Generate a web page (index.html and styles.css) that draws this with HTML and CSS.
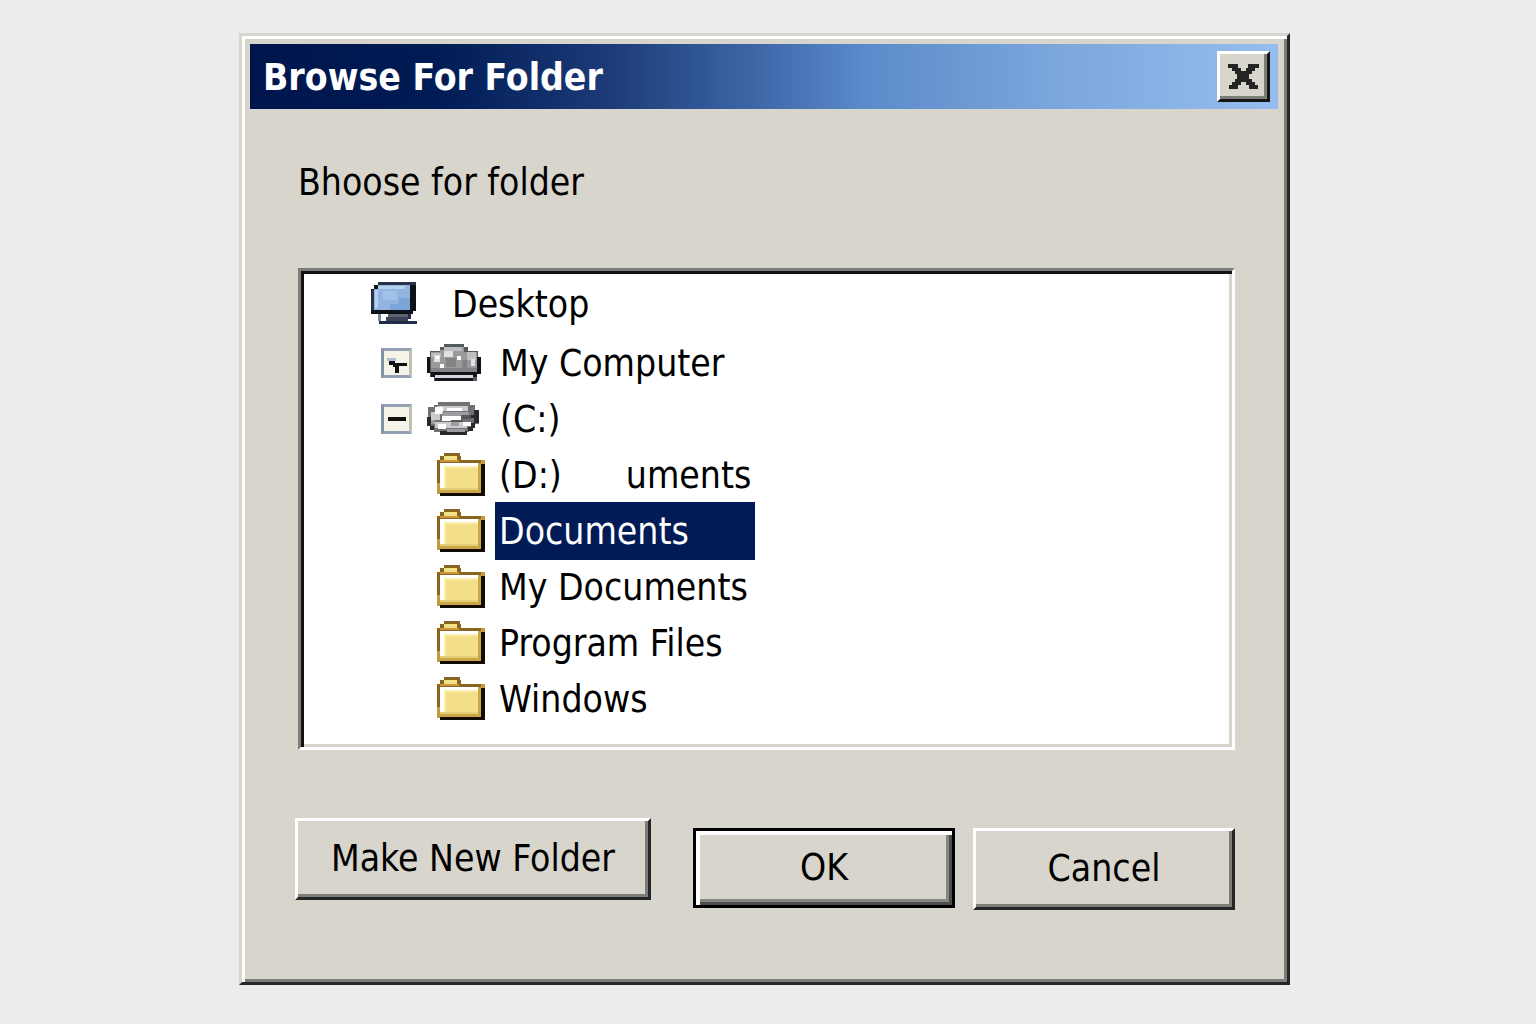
FILE: index.html
```html
<!DOCTYPE html>
<html lang="en">
<head>
<meta charset="utf-8">
<meta name="viewport" content="width=device-width, initial-scale=1">
<title>Browse For Folder</title>
<link rel="stylesheet" href="styles.css">
</head>
<body>
<svg class="sprites" aria-hidden="true">
  <symbol id="folder" viewBox="0 0 48 44">
    <path fill="#8a6420" d="M7 0h16v3h-16zM3 3h4v4h-4zM20 3h4v4h-4zM0 7h48v3h-48zM0 10h3v31h-3z"/>
    <path fill="#f3e08c" d="M7 3h13v4h-13z"/>
    <path fill="#c49a3c" d="M3 7h19v2h-19zM0 30h3v11h-3zM44 7h4v4h-4z"/>
    <path fill="#fff" d="M3 10h40v28h-40z"/>
    <path fill="#f3df88" d="M7 13h34v24h-34z"/>
    <path fill="#fbf0b0" d="M7 13h34v2h-34zM7 15h2v21h-2z"/>
    <path fill="#c9a648" d="M41 10h3v30h-3zM3 37h41v3h-41z"/>
    <path fill="#e8d07a" d="M3 35h38v2h-38z"/>
    <path fill="#120d04" d="M44 11h4v32h-4zM3 40h41v3h-41z"/>
  </symbol>
</svg>
<main class="dialog" role="dialog" aria-labelledby="dialog-title">
  <header class="titlebar">
    <h1 class="title" id="dialog-title">Browse For Folder</h1>
    <button class="close" type="button" aria-label="Close">
      <svg width="31" height="25" viewBox="0 0 31 25" shape-rendering="crispEdges" aria-hidden="true">
        <path fill="#242424" d="M0 0h10v4h-10zM20 0h11v4h-11zM4 4h9v3h-9zM18 4h9v3h-9zM7 7h17v3h-17zM9 10h12v5h-12zM7 15h17v3h-17zM4 18h9v3h-9zM18 18h9v3h-9zM1 21h9v4h-9zM21 21h9v4h-9z"/>
      </svg>
    </button>
  </header>
  <div class="content">
    <p class="prompt" id="prompt">Bhoose for folder</p>
    <ul class="tree" role="tree" aria-labelledby="prompt">
      <li class="row row-root" role="treeitem">
        <svg width="47" height="44" viewBox="0 0 47 44" shape-rendering="crispEdges" aria-hidden="true">
          <path fill="#0d1118" d="M7 0h38v29h-3v3h-42v-25h3v-4h4z"/>
          <path fill="#26334a" d="M7 0h38v3h-38zM0 8h3v20h-3z"/>
          <path fill="#92b4df" d="M3 7h4v-4h32v25h-36z"/>
          <path fill="#b7cfee" d="M7 4h27v3h-27zM4 8h3v18h-3z"/>
          <path fill="#a0c1ea" d="M12 9h14v9h-14z"/>
          <path fill="#7ba5d6" d="M28 16h11v12h-20v-6h9z"/>
          <path fill="#5d626e" d="M17 32h21v3h-21z"/>
          <path fill="#3b4359" d="M15 35h22v5h-22z"/>
          <path fill="#7e8aa5" d="M7 32h3v7h-3z"/>
          <path fill="#1f2d49" d="M8 39h38v3h-38zM37 32h3v5h-3z"/>
        </svg>
        <span class="label">Desktop</span>
      </li>
      <li class="row row-branch" role="treeitem">
        <button class="expander" type="button" aria-label="Toggle My Computer">
          <svg width="20" height="20" viewBox="0 0 20 20" shape-rendering="crispEdges" aria-hidden="true">
            <path fill="#aebfd0" d="M0 5h9v3h-9z"/>
            <path fill="#111" d="M2 8h6v2h12v3h-8v7h-4v-6h-2v-2h-4z"/>
          </svg>
        </button>
        <svg width="54" height="38" viewBox="0 0 54 38" shape-rendering="crispEdges" aria-hidden="true">
          <path fill="#555a5d" d="M17 0h20v3h4v4h10v6h3v17h-4v7h-43v-4h-4v-4h-3v-16h3v-6h10v-4h4z"/>
          <path fill="#111316" d="M0 13h3v15h47v-15h4v17h-4v3h-46v-4h-4z"/>
          <path fill="#9a9a9c" d="M17 3h20v5h13v20h-46v-20h9v-2h4z"/>
          <path fill="#bebec0" d="M17 3h18v4h-18zM4 9h10v4h-10zM40 8h9v8h-9z"/>
          <path fill="#e2e2e4" d="M17 7h9v6h-9zM7 11h6v7h-6zM44 15h4v7h-4z"/>
          <path fill="#fff" d="M13 20h4v4h-4zM30 12h4v4h-4zM9 12h3v3h-3z"/>
          <path fill="#838386" d="M19 14h10v9h-10zM4 24h46v4h-46zM35 16h5v8h-5z"/>
          <path fill="#d6d6df" d="M8 31h38v3h-38z"/>
          <path fill="#16181b" d="M8 34h38v3h-38z"/>
        </svg>
        <span class="label">My Computer</span>
      </li>
      <li class="row row-branch" role="treeitem">
        <button class="expander" type="button" aria-label="Collapse (C:)">
          <svg width="20" height="20" viewBox="0 0 20 20" shape-rendering="crispEdges" aria-hidden="true">
            <path fill="#111" d="M1 8h18v4h-18z"/>
          </svg>
        </button>
        <svg width="54" height="34" viewBox="0 0 54 34" shape-rendering="crispEdges" aria-hidden="true">
          <path fill="#707274" d="M7 3h4v-3h32v3h5v6h4v13h-4v4h-6v4h-35v-4h-3v-4h-3v-17h6z"/>
          <path fill="#27292c" d="M0 15h4v9h3v4h-4v-4h-3zM47 8h5v13h-4v5h-4v-5h3v-5h-13v-3h13zM13 29h27v4h-27zM41 25h5v4h-5z"/>
          <path fill="#c9cbcd" d="M10 4h31v5h-31zM4 10h9v8h-9zM8 20h32v6h-32z"/>
          <path fill="#fff" d="M8 5h8v7h-8zM20 6h15v3h-15zM15 14h19v5h-19zM11 22h8v5h-8zM36 20h8v4h-8z"/>
          <path fill="#9b9da0" d="M15 10h27v4h-27zM24 20h8v4h-8zM4 18h4v4h-4zM20 27h18v3h-18z"/>
          <path fill="#54585a" d="M34 13h10v4h-10zM24 18h12v2h-12z"/>
        </svg>
        <span class="label">(C:)</span>
      </li>
      <li class="row row-leaf" role="treeitem">
        <svg class="folder" shape-rendering="crispEdges" aria-hidden="true"><use href="#folder"/></svg>
        <span class="label label-split"><span>(D:)</span><span>uments</span></span>
      </li>
      <li class="row row-leaf" role="treeitem" aria-selected="true">
        <svg class="folder" shape-rendering="crispEdges" aria-hidden="true"><use href="#folder"/></svg>
        <span class="label label-selected">Documents</span>
      </li>
      <li class="row row-leaf" role="treeitem">
        <svg class="folder" shape-rendering="crispEdges" aria-hidden="true"><use href="#folder"/></svg>
        <span class="label">My Documents</span>
      </li>
      <li class="row row-leaf" role="treeitem">
        <svg class="folder" shape-rendering="crispEdges" aria-hidden="true"><use href="#folder"/></svg>
        <span class="label">Program Files</span>
      </li>
      <li class="row row-leaf" role="treeitem">
        <svg class="folder" shape-rendering="crispEdges" aria-hidden="true"><use href="#folder"/></svg>
        <span class="label">Windows</span>
      </li>
    </ul>
    <footer class="actions">
      <button class="button button-new" type="button">Make New Folder</button>
      <div class="confirm">
        <button class="button button-default" type="button">OK</button>
        <button class="button" type="button">Cancel</button>
      </div>
    </footer>
  </div>
</main>
</body>
</html>
```
FILE: styles.css
```css
* {
  box-sizing: border-box;
}

:root {
  --face: #d8d5cc;
  --shadow: #7d7d79;
  --dark: #252628;
}

body {
  margin: 0;
  padding: 33px 246px 39px 239px;
  background: #ececec;
  color: #000;
  font: 37px/48px "DejaVu Sans Condensed", "DejaVu Sans", Tahoma, sans-serif;
}

button {
  font: inherit;
  color: inherit;
}

.sprites {
  display: none;
}

.dialog {
  padding: 8px 9px 6px 8px;
  background: var(--face);
  border: 3px solid;
  border-color: #d8d5cc var(--dark) var(--dark) #d8d5cc;
  box-shadow: inset 3px 3px #fff, inset -3px -3px var(--shadow);
}

.titlebar {
  display: flex;
  align-items: center;
  justify-content: space-between;
  height: 65px;
  padding: 0 8px 0 13px;
  background: linear-gradient(90deg, #00154c 0%, #001b55 18%, #1c3b78 35%, #4069aa 50%, #5b8bca 60%, #7ba6dc 78%, #96bdee 100%);
}

.title {
  margin: 0;
  padding-top: 2px;
  color: #fff;
  font-size: 37px;
  font-weight: bold;
}

.close {
  display: grid;
  place-items: center;
  width: 53px;
  height: 51px;
  padding: 0;
  background: var(--face);
  border: 3px solid;
  border-color: #fff #151515 #151515 #fff;
  box-shadow: inset -3px -3px var(--shadow);
}

.content {
  padding: 50px 43px 66px 48px;
}

.prompt {
  margin: 0 0 61px;
}

.tree {
  margin: 0;
  padding: 5px 3px 20px;
  list-style: none;
  background: #fff;
  border: 3px solid;
  border-color: #7c7c7a #fff #fff #7c7c7a;
  box-shadow: inset 3px 3px #111, inset -3px -3px #d8d5cc;
}

.row {
  display: flex;
  align-items: center;
  height: 56px;
}

.row svg {
  flex: none;
}

.row-root {
  gap: 30px;
  margin-bottom: 3px;
  padding-left: 67px;
}

.row-branch {
  gap: 15px;
  padding-left: 77px;
}

.row-leaf {
  gap: 10px;
  padding-left: 133px;
}

.folder {
  width: 48px;
  height: 44px;
}

.label {
  padding: 6px 4px 4px;
  white-space: nowrap;
}

.label-split {
  display: flex;
  gap: 64px;
}

.label-selected {
  min-width: 260px;
  background: #001b55;
  color: #fff;
}

.expander {
  display: grid;
  place-items: center;
  width: 31px;
  height: 30px;
  padding: 0;
  background: #f6f4e8;
  border: 3px solid;
  border-color: #93a0b3 #bfc0b4 #93a0b3 #8492a8;
}

.actions {
  display: flex;
  align-items: flex-start;
  justify-content: space-between;
  margin: 68px 0 0 -3px;
}

.confirm {
  display: flex;
  gap: 18px;
  margin-top: 10px;
}

.button {
  width: 262px;
  height: 82px;
  padding: 0;
  background: var(--face);
  border: 3px solid;
  border-color: #fff var(--dark) var(--dark) #fff;
  box-shadow: inset -3px -3px var(--shadow);
}

.button-new {
  width: 356px;
}

.button-default {
  height: 80px;
  border-color: #000;
  box-shadow: inset 4px 4px #fff, inset -3px -3px #4c4c4b, inset -6px -6px #858581;
}
```
